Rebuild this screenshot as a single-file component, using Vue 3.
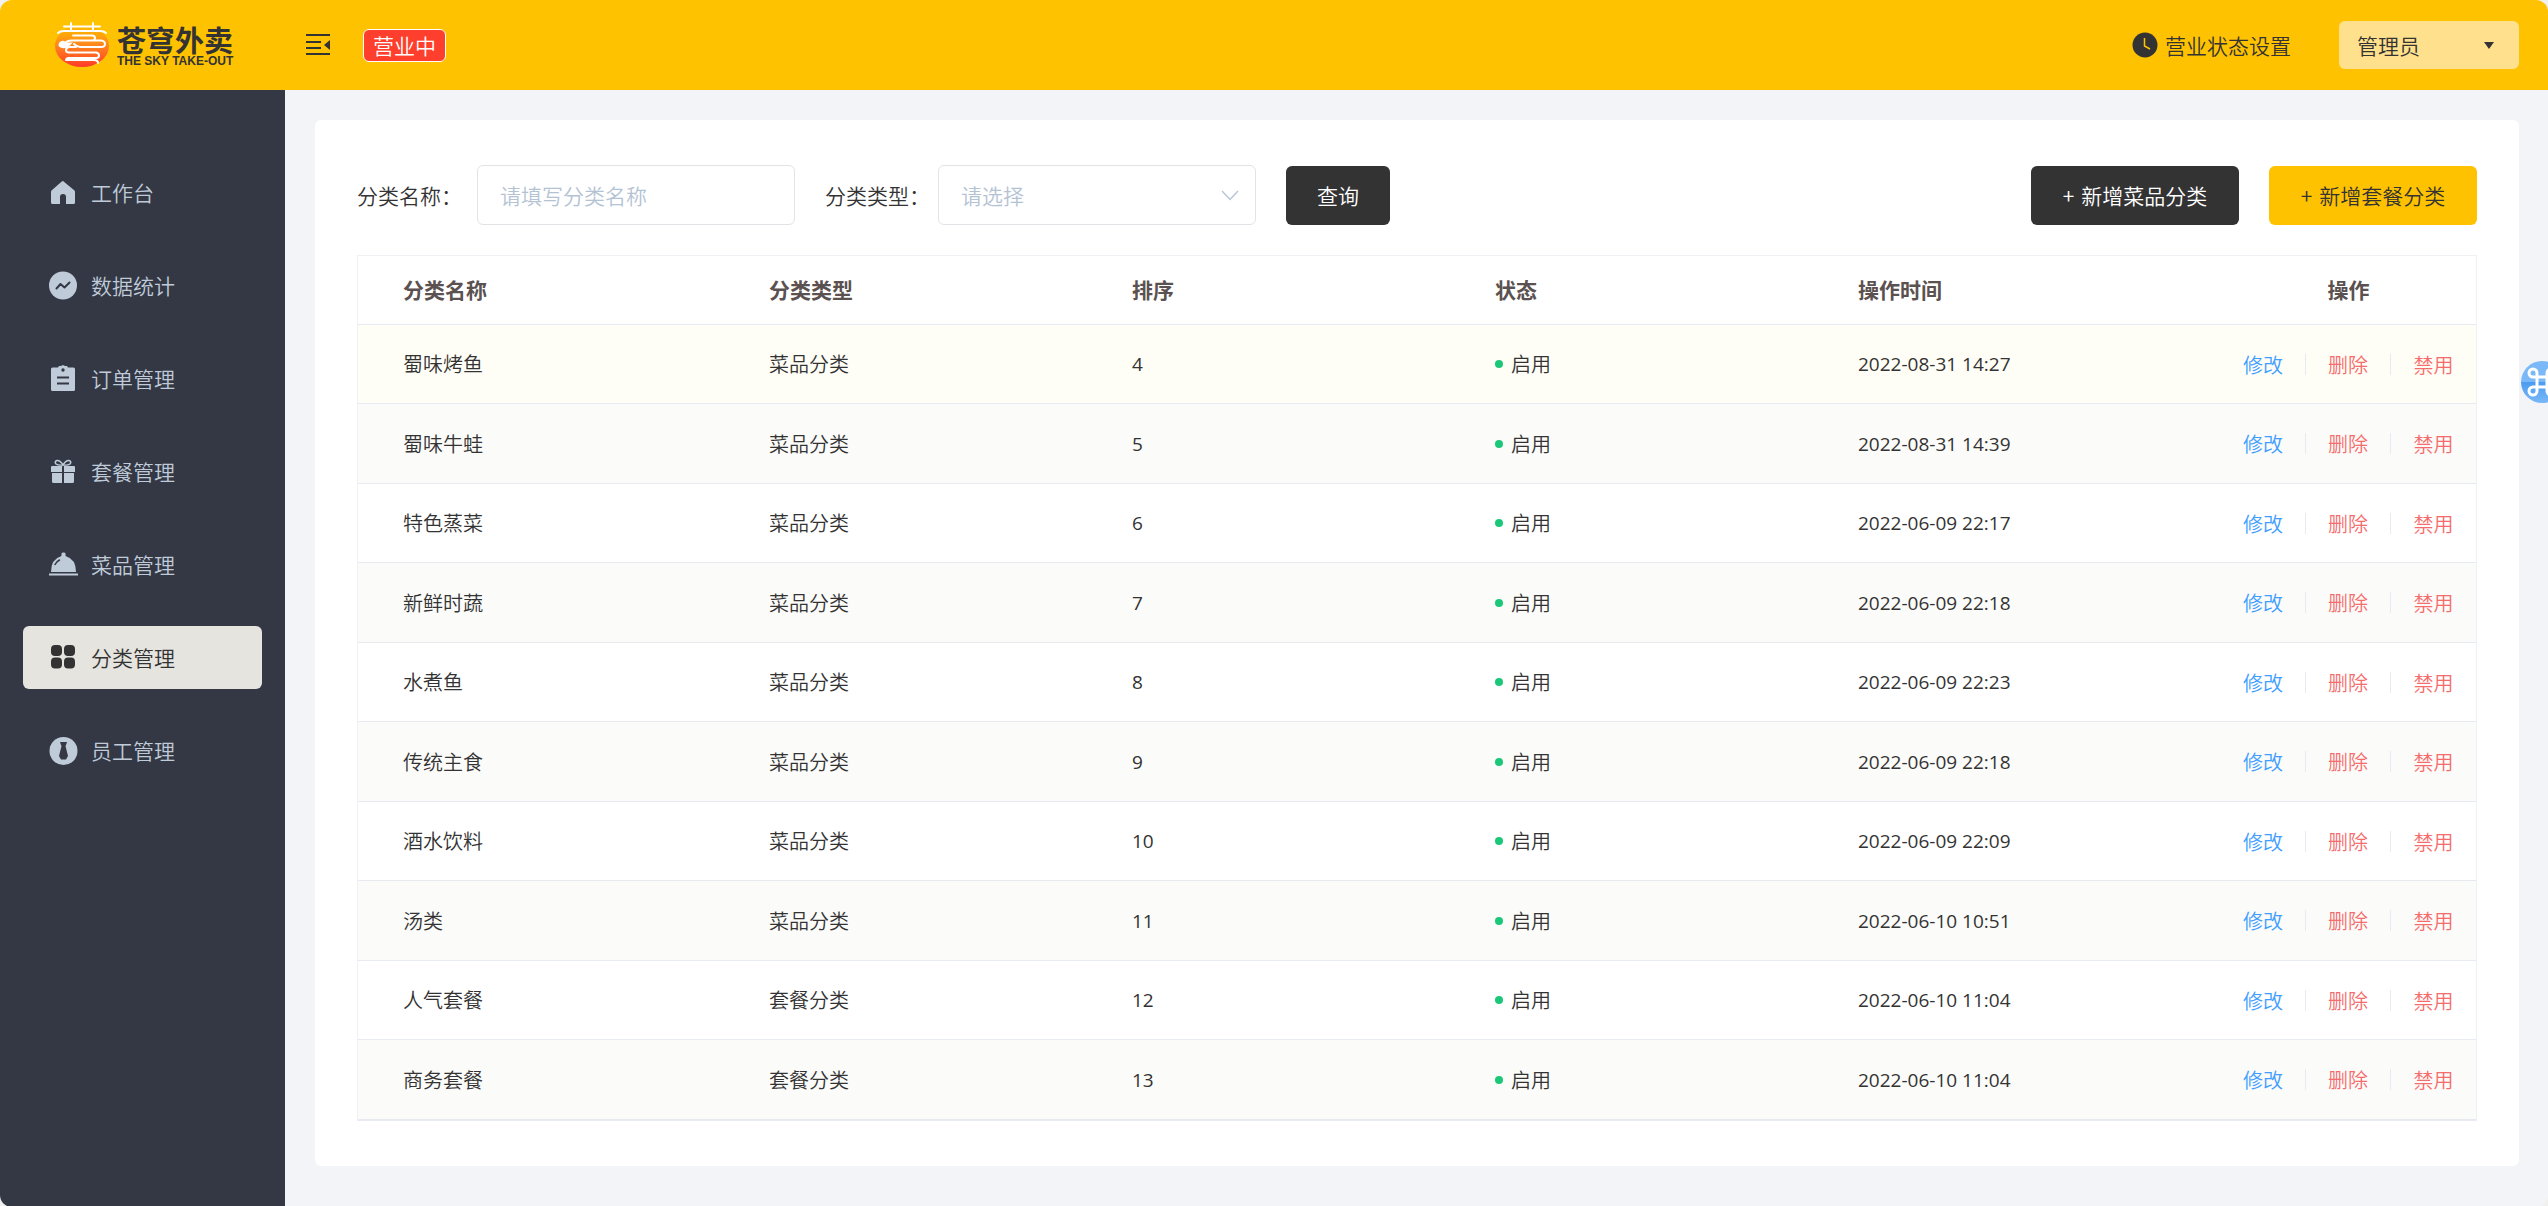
<script setup>
import { ref } from 'vue'

const menu = [
  { label: '工作台', icon: 'home' },
  { label: '数据统计', icon: 'chart' },
  { label: '订单管理', icon: 'order' },
  { label: '套餐管理', icon: 'gift' },
  { label: '菜品管理', icon: 'dish' },
  { label: '分类管理', icon: 'grid' },
  { label: '员工管理', icon: 'staff' },
]
const active = ref('grid')
const name = ref('')
const type = ref('')
const rows = [
  ['蜀味烤鱼', '菜品分类', 4, '2022-08-31 14:27'],
  ['蜀味牛蛙', '菜品分类', 5, '2022-08-31 14:39'],
  ['特色蒸菜', '菜品分类', 6, '2022-06-09 22:17'],
  ['新鲜时蔬', '菜品分类', 7, '2022-06-09 22:18'],
  ['水煮鱼', '菜品分类', 8, '2022-06-09 22:23'],
  ['传统主食', '菜品分类', 9, '2022-06-09 22:18'],
  ['酒水饮料', '菜品分类', 10, '2022-06-09 22:09'],
  ['汤类', '菜品分类', 11, '2022-06-10 10:51'],
  ['人气套餐', '套餐分类', 12, '2022-06-10 11:04'],
  ['商务套餐', '套餐分类', 13, '2022-06-10 11:04'],
]
</script>

<template>
  <div class="app">
    <header class="topbar">
      <div class="logo">
        <svg class="logo-mark" viewBox="0 0 56 46" aria-hidden="true">
          <defs>
            <linearGradient id="sun" x1="0" y1="0" x2="0" y2="1">
              <stop offset="0.1" stop-color="#ffb400" />
              <stop offset="0.45" stop-color="#ff8a1c" />
              <stop offset="1" stop-color="#ff3a2a" />
            </linearGradient>
          </defs>
          <ellipse cx="28" cy="24" rx="27" ry="21" fill="url(#sun)" />
          <g fill="none" stroke="#fff" stroke-width="2" stroke-linecap="round" stroke-linejoin="round">
            <path d="M10 4.500H46M17 1V8M39 1V8M4 11Q6 9 10 9H46Q50 9 52 11" />
            <path d="M19 13.500H38Q41 13.500 41 16T38 18.500H18Q12 18.500 11 22M38 18.500H47Q51 19 51 22T47 25H26Q23 25 20 22" />
            <path d="M22 25H15Q12 25.500 12 28T15 30.500H42Q45 31 45 33.500T42 36H14Q12 36.500 12 38H40Q44 38 44 41" />
          </g>
          <path d="M5 21Q8 17 12 20Q15 21 19 20Q14 27 8 26Q3 25 5 21Z" fill="#fff" />
        </svg>
        <div class="logo-text">
          <span class="logo-cn">苍穹外卖</span>
          <span class="logo-en">THE SKY TAKE-OUT</span>
        </div>
      </div>
      <button class="fold" type="button" aria-label="收起菜单">
        <svg viewBox="0 0 24 22" width="24" height="22" fill="#333">
          <path d="M0 0H24V2H0zM0 7H15V9H0zM0 13H15V15H0zM0 19H24V21H0zM24 6V16L18 11z" />
        </svg>
      </button>
      <span class="badge">营业中</span>
      <button class="status" type="button">
        <svg viewBox="0 0 26 26" width="26" height="26">
          <circle cx="13" cy="13" r="12.500" fill="#333" />
          <path d="M12.500 6V14L18 17" fill="none" stroke="#ffc200" stroke-width="1.500" />
        </svg>
        <span>营业状态设置</span>
      </button>
      <button class="user" type="button">
        <span>管理员</span>
        <svg viewBox="0 0 10 7" width="10" height="7"><path d="M0 0H10L5 7z" fill="#333" /></svg>
      </button>
    </header>

    <div class="body">
      <nav class="side">
        <a
          v-for="m in menu"
          :key="m.icon"
          href="#"
          class="item"
          :class="{ active: active === m.icon }"
          @click.prevent="active = m.icon"
        >
          <svg class="ico" viewBox="0 0 30 30" fill="currentColor" aria-hidden="true">
            <path v-if="m.icon === 'home'" d="M15 3L26.500 12.500Q27 13 27 14V24.500Q27 26 25.500 26H18V19Q18 16 15 16T12 19V26H4.500Q3 26 3 24.500V14Q3 13 3.500 12.500L13.500 3.700Q15 2.500 16.500 3.700Z" />
            <template v-else-if="m.icon === 'chart'">
              <circle cx="15" cy="14.500" r="14" />
              <path d="M8.500 17.500L12.500 13L16.500 16.500L21.500 11.500" fill="none" stroke="#343744" stroke-width="2" stroke-linecap="round" stroke-linejoin="round" />
            </template>
            <template v-else-if="m.icon === 'order'">
              <path d="M4.500 3.500H10L11 2H13L15 1L17 2H19L20 3.500H25.500Q27 3.500 27 5V25.500Q27 27 25.500 27H4.500Q3 27 3 25.500V5Q3 3.500 4.500 3.500Z" />
              <path d="M9 13.500H21M9 19.500H21" stroke="#343744" stroke-width="2" />
              <circle cx="15" cy="6" r="1.700" fill="#343744" />
            </template>
            <template v-else-if="m.icon === 'gift'">
              <path d="M15 8Q12 3 9 3.500Q6 4.500 8 7Q10 8.500 15 8Q20 8.500 22 7Q24 4.500 21 3.500Q18 3 15 8Z" fill="none" stroke="currentColor" stroke-width="1.500" />
              <path d="M3 10Q3 9 4 9H14V15H3zM16 9H26Q27 9 27 10V15H16zM4 16H14V26H5.500Q4 26 4 24.500zM16 16H26V24.500Q26 26 24.500 26H16z" />
            </template>
            <template v-else-if="m.icon === 'dish'">
              <path d="M13.500 5V3.500Q13.500 2.500 15.500 2.500T17.500 3.500V5Q17.500 6 18 6.200Q28 9 28 22H3Q3 9 13 6.200Q13.500 6 13.500 5ZM1 23.500H30V25.500H1z" />
              <path d="M7 14.500Q8.500 11.500 11.500 10" fill="none" stroke="#343744" stroke-width="1.500" stroke-linecap="round" />
            </template>
            <path v-else-if="m.icon === 'grid'" d="M7 2H10Q14 2 14 6V9Q14 13 10 13H7Q3 13 3 9V6Q3 2 7 2ZM20 2H23Q27 2 27 6V9Q27 13 23 13H20Q16 13 16 9V6Q16 2 20 2ZM7 14.500H10Q14 14.500 14 18.500V21.500Q14 25.500 10 25.500H7Q3 25.500 3 21.500V18.500Q3 14.500 7 14.500ZM20 14.500H23Q27 14.500 27 18.500V21.500Q27 25.500 23 25.500H20Q16 25.500 16 21.500V18.500Q16 14.500 20 14.500Z" />
            <template v-else>
              <circle cx="15.500" cy="15" r="14" />
              <path d="M12 6H19L18.200 8.500L17.500 10L20 20L18 23.500H13L11 20L13.500 10L12.800 8.500Z" fill="#343744" />
            </template>
          </svg>
          <span>{{ m.label }}</span>
        </a>
      </nav>

      <main class="main">
        <section class="card">
          <form class="filters" @submit.prevent>
            <label class="lab" for="f-name">分类名称：</label>
            <input id="f-name" v-model="name" class="field" type="text" placeholder="请填写分类名称" />
            <label class="lab second" for="f-type">分类类型：</label>
            <div class="select-box">
              <select id="f-type" v-model="type" class="field" :class="{ empty: !type }">
                <option value="">请选择</option>
                <option value="1">菜品分类</option>
                <option value="2">套餐分类</option>
              </select>
              <svg class="chev" viewBox="0 0 18 11" width="18" height="11"><path d="M1 1L9 9.500L17 1" fill="none" stroke="#b8c6d6" stroke-width="1.500" /></svg>
            </div>
            <button class="btn dark query" type="submit">查询</button>
            <button class="btn dark add first" type="button"><span>+</span><span>新增菜品分类</span></button>
            <button class="btn gold add" type="button"><span>+</span><span>新增套餐分类</span></button>
          </form>

          <table class="grid">
            <colgroup>
              <col />
              <col class="c-mid" />
              <col class="c-mid" />
              <col class="c-mid" />
              <col class="c-mid" />
              <col class="c-ops" />
            </colgroup>
            <thead>
              <tr>
                <th>分类名称</th>
                <th>分类类型</th>
                <th>排序</th>
                <th>状态</th>
                <th>操作时间</th>
                <th class="ops">操作</th>
              </tr>
            </thead>
            <tbody>
              <tr v-for="(r, i) in rows" :key="r[0]" :class="{ hover: i === 0 }">
                <td>{{ r[0] }}</td>
                <td>{{ r[1] }}</td>
                <td class="num">{{ r[2] }}</td>
                <td><span class="state"><i class="dot"></i>启用</span></td>
                <td class="num">{{ r[3] }}</td>
                <td class="ops">
                  <div class="acts">
                    <button type="button" class="edit">修改</button>
                    <button type="button">删除</button>
                    <button type="button">禁用</button>
                  </div>
                </td>
              </tr>
            </tbody>
          </table>
        </section>
      </main>
    </div>

    <button class="float" type="button" aria-label="快捷命令">
      <svg viewBox="0 0 42 42" width="42" height="42">
        <path d="M16 16H26V26H16zM16 16V12A4 4 0 1 0 12 16H16M26 16H30A4 4 0 1 0 26 12V16M26 26V30A4 4 0 1 0 30 26H26M16 26H12A4 4 0 1 0 16 30V26" fill="none" stroke="#fff" stroke-width="3" />
      </svg>
    </button>
  </div>
</template>

<style>
body {
  margin: 0;
  background: #f0f0ee;
}
</style>

<style scoped>
.app {
  position: relative;
  display: flex;
  flex-direction: column;
  min-height: 100vh;
  border-radius: 12px;
  overflow: hidden;
  background: #f3f4f7;
  color: #333;
  font-family: "Noto Sans CJK SC", sans-serif;
  font-weight: 350;
  font-size: 21px;
  line-height: 30px;
}
* {
  box-sizing: border-box;
}
button,
input,
select {
  font: inherit;
  color: inherit;
  margin: 0;
}
button {
  padding: 0;
  border: 0;
  background: none;
  cursor: pointer;
}
svg {
  display: block;
  flex: none;
}
.topbar {
  display: flex;
  align-items: center;
  height: 90px;
  padding: 0 29px 0 54px;
  background: #ffc200;
}
.logo {
  display: flex;
  align-items: center;
  gap: 7px;
  width: 252px;
}
.logo-mark {
  width: 56px;
  height: 46px;
}
.logo-text {
  display: flex;
  flex-direction: column;
  white-space: nowrap;
}
.logo-cn {
  font-size: 29px;
  line-height: 32px;
  font-weight: 700;
}
.logo-en {
  font: bold 12px/12px "Liberation Sans", sans-serif;
}
.badge {
  margin-left: 33px;
  padding: 0 9px;
  border: 1px solid #fff;
  border-radius: 6px;
  background: #ff3f2d;
  color: #fff;
  line-height: 31px;
}
.status {
  display: flex;
  align-items: center;
  gap: 7px;
  margin-left: auto;
}
.user {
  display: flex;
  align-items: center;
  justify-content: space-between;
  width: 180px;
  height: 48px;
  margin-left: 48px;
  padding: 0 25px 0 18px;
  border-radius: 6px;
  background: #ffe08c;
}
.body {
  display: flex;
  flex: 1;
}
.side {
  display: flex;
  flex: none;
  flex-direction: column;
  gap: 30px;
  width: 285px;
  padding: 71px 23px 0;
  background: #343744;
}
.item {
  display: flex;
  align-items: center;
  gap: 13px;
  height: 63px;
  padding-left: 25px;
  border-radius: 6px;
  color: #bfcbd9;
  text-decoration: none;
}
.item span {
  padding-bottom: 2px;
}
.item.active {
  background: #e5e4df;
  color: #333;
}
.ico {
  width: 30px;
  height: 30px;
}
.main {
  flex: 1;
  min-width: 0;
  padding: 30px 29px 41px 30px;
}
.card {
  padding: 45px 42px;
  border-radius: 6px;
  background: #fff;
}
.filters {
  display: flex;
  align-items: center;
  margin-bottom: 30px;
}
.lab {
  width: 120px;
  white-space: nowrap;
}
.second {
  width: 113px;
  margin-left: 30px;
}
.field {
  width: 318px;
  height: 60px;
  padding: 0 22px;
  border: 1px solid #e2e3e6;
  border-radius: 6px;
  background: #fff;
  outline: none;
}
.field::placeholder,
.field.empty {
  color: #b4c3d4;
  opacity: 1;
}
.select-box {
  position: relative;
  display: flex;
}
select.field {
  appearance: none;
}
.chev {
  position: absolute;
  top: 25px;
  right: 17px;
  pointer-events: none;
}
.btn {
  display: flex;
  align-items: center;
  justify-content: center;
  gap: 7px;
  height: 59px;
  border-radius: 6px;
}
.dark {
  background: #333;
  color: #fff;
}
.gold {
  background: #ffc200;
}
.query {
  width: 104px;
  margin-left: 30px;
}
.add {
  width: 208px;
  margin-left: 30px;
}
.first {
  margin-left: auto;
}
.grid {
  width: 100%;
  table-layout: fixed;
  border-collapse: separate;
  border-spacing: 0;
  border: 1px solid #f0f1f5;
  border-bottom-color: #e8eaf4;
  font-size: 20px;
}
.c-mid {
  width: 17.140%;
}
.c-ops {
  width: 270px;
}
.grid th,
.grid td {
  padding: 0 15px;
  border-bottom: 1px solid #e8eaf2;
  text-align: left;
}
.grid th:first-child,
.grid td:first-child {
  padding-left: 45px;
}
.grid th {
  height: 69px;
  padding-bottom: 2px;
  font-size: 21px;
  font-weight: 700;
  color: #5b5150;
}
.grid td {
  height: 80px;
}
.grid tr:nth-child(odd) td {
  height: 79px;
}
.grid tr:nth-child(even) td {
  background: #fbfbf9;
}
.grid tr.hover td {
  background: #fffef6;
}
.grid .num {
  font-family: "Open Sans", sans-serif;
  font-weight: 400;
  font-size: 19px;
}
.state {
  display: flex;
  align-items: center;
  gap: 8px;
}
.dot {
  width: 8px;
  height: 8px;
  border-radius: 50%;
  background: #1dc779;
}
.grid .ops {
  padding-right: 0;
  text-align: center;
}
.acts {
  display: flex;
  justify-content: center;
}
.acts button {
  width: 86px;
  line-height: 21px;
  border-right: 1px solid #e8eaf2;
  color: #f56c6c;
}
.acts button:last-child {
  border-right: 0;
}
.acts .edit {
  color: #419eff;
}
.float {
  position: absolute;
  top: 361px;
  right: -15px;
  width: 42px;
  height: 42px;
  border-radius: 50%;
  background: linear-gradient(#7ab8f8 50%, #4b9bf0 50%, #7ab8f8);
}
</style>
